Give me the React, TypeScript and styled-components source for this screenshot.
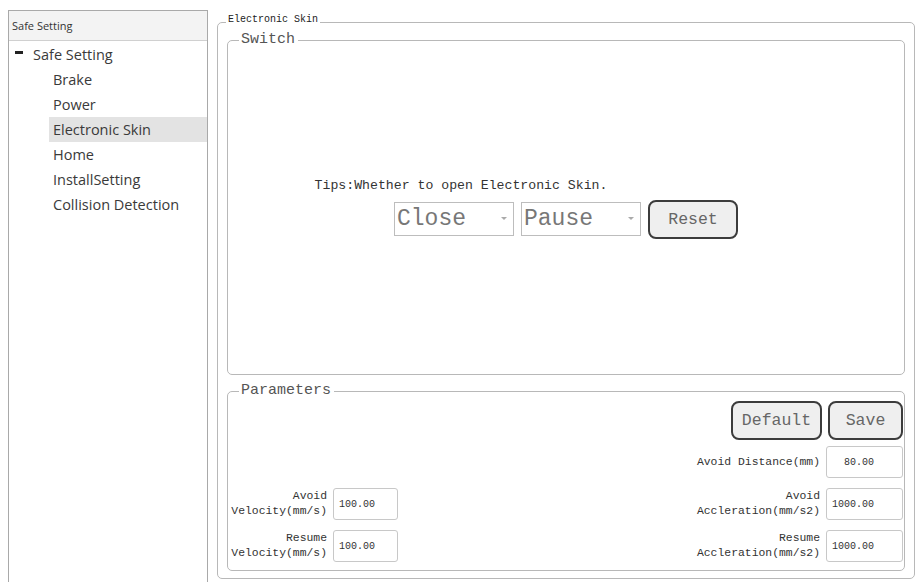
import React from "react";
import styled, { createGlobalStyle } from "styled-components";

const GlobalStyle = createGlobalStyle`
  html, body {
    margin: 0;
    padding: 0;
    background: #ffffff;
    overflow: hidden;
  }
  #root {
    width: 921px;
    height: 582px;
    overflow: hidden;
  }
`;

const mono = `"Liberation Mono", "DejaVu Sans Mono", monospace`;
const sans = `"Open Sans", "Noto Sans", "Liberation Sans", sans-serif`;

const Page = styled.div`
  display: flex;
  align-items: flex-start;
  gap: 9px;
  padding: 10px 0 0 8px;
`;

/* ---------- left tree ---------- */
const TreePanel = styled.div`
  box-sizing: border-box;
  width: 200px;
  height: 600px;
  border: 1px solid #a9a9a9;
  background: #fff;
  display: flex;
  flex-direction: column;
`;

const TreeHeader = styled.div`
  height: 29px;
  display: flex;
  align-items: center;
  padding-left: 3px;
  background: #f3f3f3;
  border-bottom: 1px solid #d0d0d0;
  font-family: ${sans};
  font-size: 11px;
  color: #333;
`;

const TreeList = styled.div`
  display: flex;
  flex-direction: column;
  padding-top: 1px;
`;

const TreeRow = styled.div<{ $level: number; $selected?: boolean }>`
  height: 25px;
  display: flex;
  align-items: center;
  margin-left: ${({ $level }) => ($level === 0 ? 0 : 40)}px;
  padding-left: ${({ $level }) => ($level === 0 ? 6 : 4)}px;
  background: ${({ $selected }) => ($selected ? "#e3e3e3" : "transparent")};
  font-family: ${sans};
  font-size: 14.5px;
  color: #3a3a3a;
  white-space: nowrap;
`;

const Collapse = styled.span`
  display: inline-block;
  width: 8px;
  height: 3px;
  background: #222;
  margin-right: 10px;
  margin-top: -4px;
`;

/* ---------- right side ---------- */
const Group = styled.fieldset<{ $h: number }>`
  box-sizing: border-box;
  margin: 0;
  min-width: 0;
  height: ${({ $h }) => $h}px;
  border: 1px solid #b8b8b8;
  border-radius: 5px;
  padding: 0 9px 0 9px;
`;

const OuterGroup = styled(Group)`
  width: 698px;
  margin-top: 4px;
`;

const InnerGroup = styled(Group)<{ $gap?: number }>`
  padding: 0;
  margin-top: ${({ $gap }) => $gap ?? 0}px;
`;

const SmallLegend = styled.legend`
  margin-left: -1px;
  padding: 0 2px 5px 2px;
  font-family: ${mono};
  font-size: 10px;
  line-height: 12px;
  color: #222;
`;

const BigLegend = styled.legend`
  margin-left: 11px;
  padding: 0 3px 0 2px;
  font-family: ${mono};
  font-size: 15px;
  line-height: 18px;
  color: #555;
`;

const SwitchBody = styled.div`
  height: 322px;
  display: flex;
  flex-direction: column;
  align-items: center;
  justify-content: center;
  gap: 6px;
  padding-bottom: 4px;
  box-sizing: border-box;
`;

const Tips = styled.div`
  font-family: ${mono};
  font-size: 13.2px;
  line-height: 16px;
  color: #333;
  margin-right: 210px;
  white-space: nowrap;
`;

const ControlRow = styled.div`
  display: flex;
  align-items: center;
  gap: 7px;
`;

const Combo = styled.div`
  box-sizing: border-box;
  width: 120px;
  height: 34px;
  border: 1px solid #bdbdbd;
  background: #fff;
  display: flex;
  align-items: center;
  justify-content: space-between;
  padding: 0 6px 0 2px;
  font-family: ${mono};
  font-size: 23px;
  color: #777;
`;

const Arrow = styled.span`
  width: 0;
  height: 0;
  border-left: 3px solid transparent;
  border-right: 3px solid transparent;
  border-top: 3px solid #aaa;
  margin-top: -2px;
`;

const Button = styled.button<{ $w: number }>`
  box-sizing: border-box;
  width: ${({ $w }) => $w}px;
  height: 39px;
  border: 2px solid #3c3c3c;
  border-radius: 8px;
  background: #efefef;
  font-family: ${mono};
  font-size: 16.5px;
  color: #666;
  padding: 0;
  margin: 0;
`;

const ParamBody = styled.div`
  display: flex;
  flex-direction: column;
  padding: 1px 1px 0 1px;
`;

const ButtonRow = styled.div`
  display: flex;
  justify-content: flex-end;
  gap: 6px;
`;

const FieldRow = styled.div<{ $top: number }>`
  display: flex;
  justify-content: space-between;
  align-items: center;
  margin-top: ${({ $top }) => $top}px;
`;

const Field = styled.div`
  display: flex;
  align-items: center;
  gap: 6px;
`;

const Label = styled.div<{ $w: number }>`
  width: ${({ $w }) => $w}px;
  text-align: right;
  font-family: ${mono};
  font-size: 11.4px;
  line-height: 15px;
  color: #333;
  white-space: pre;
`;

const NumBox = styled.div<{ $w: number }>`
  box-sizing: border-box;
  width: ${({ $w }) => $w}px;
  height: 32px;
  border: 1px solid #c8c8c8;
  border-radius: 3px;
  background: #fff;
  display: flex;
  align-items: center;
  padding-left: 5px;
  font-family: ${mono};
  font-size: 10px;
  color: #333;
`;

const Spacer = styled.div``;

const tree = [
  "Brake",
  "Power",
  "Electronic Skin",
  "Home",
  "InstallSetting",
  "Collision Detection",
];

export default function App() {
  return (
    <>
      <GlobalStyle />
      <Page>
        <TreePanel>
          <TreeHeader>Safe Setting</TreeHeader>
          <TreeList>
            <TreeRow $level={0}>
              <Collapse />
              Safe Setting
            </TreeRow>
            {tree.map((t) => (
              <TreeRow key={t} $level={1} $selected={t === "Electronic Skin"}>
                {t}
              </TreeRow>
            ))}
          </TreeList>
        </TreePanel>

        <OuterGroup $h={565}>
          <SmallLegend>Electronic Skin</SmallLegend>
          <InnerGroup $h={344}>
            <BigLegend>Switch</BigLegend>
            <SwitchBody>
              <Tips>Tips:Whether to open Electronic Skin.</Tips>
              <ControlRow>
                <Combo>
                  Close
                  <Arrow />
                </Combo>
                <Combo>
                  Pause
                  <Arrow />
                </Combo>
                <Button $w={90}>Reset</Button>
              </ControlRow>
            </SwitchBody>
          </InnerGroup>

          <InnerGroup $h={189} $gap={7}>
            <BigLegend>Parameters</BigLegend>
            <ParamBody>
              <ButtonRow>
                <Button $w={91}>Default</Button>
                <Button $w={75}>Save</Button>
              </ButtonRow>
              <FieldRow $top={6}>
                <Spacer />
                <Field>
                  <Label $w={130}>Avoid Distance(mm)</Label>
                  <NumBox $w={77}>&nbsp;&nbsp;80.00</NumBox>
                </Field>
              </FieldRow>
              <FieldRow $top={10}>
                <Field>
                  <Label $w={98}>{"Avoid\nVelocity(mm/s)"}</Label>
                  <NumBox $w={65}>100.00</NumBox>
                </Field>
                <Field>
                  <Label $w={130}>{"Avoid\nAccleration(mm/s2)"}</Label>
                  <NumBox $w={77}>1000.00</NumBox>
                </Field>
              </FieldRow>
              <FieldRow $top={10}>
                <Field>
                  <Label $w={98}>{"Resume\nVelocity(mm/s)"}</Label>
                  <NumBox $w={65}>100.00</NumBox>
                </Field>
                <Field>
                  <Label $w={130}>{"Resume\nAccleration(mm/s2)"}</Label>
                  <NumBox $w={77}>1000.00</NumBox>
                </Field>
              </FieldRow>
            </ParamBody>
          </InnerGroup>
        </OuterGroup>
      </Page>
    </>
  );
}
